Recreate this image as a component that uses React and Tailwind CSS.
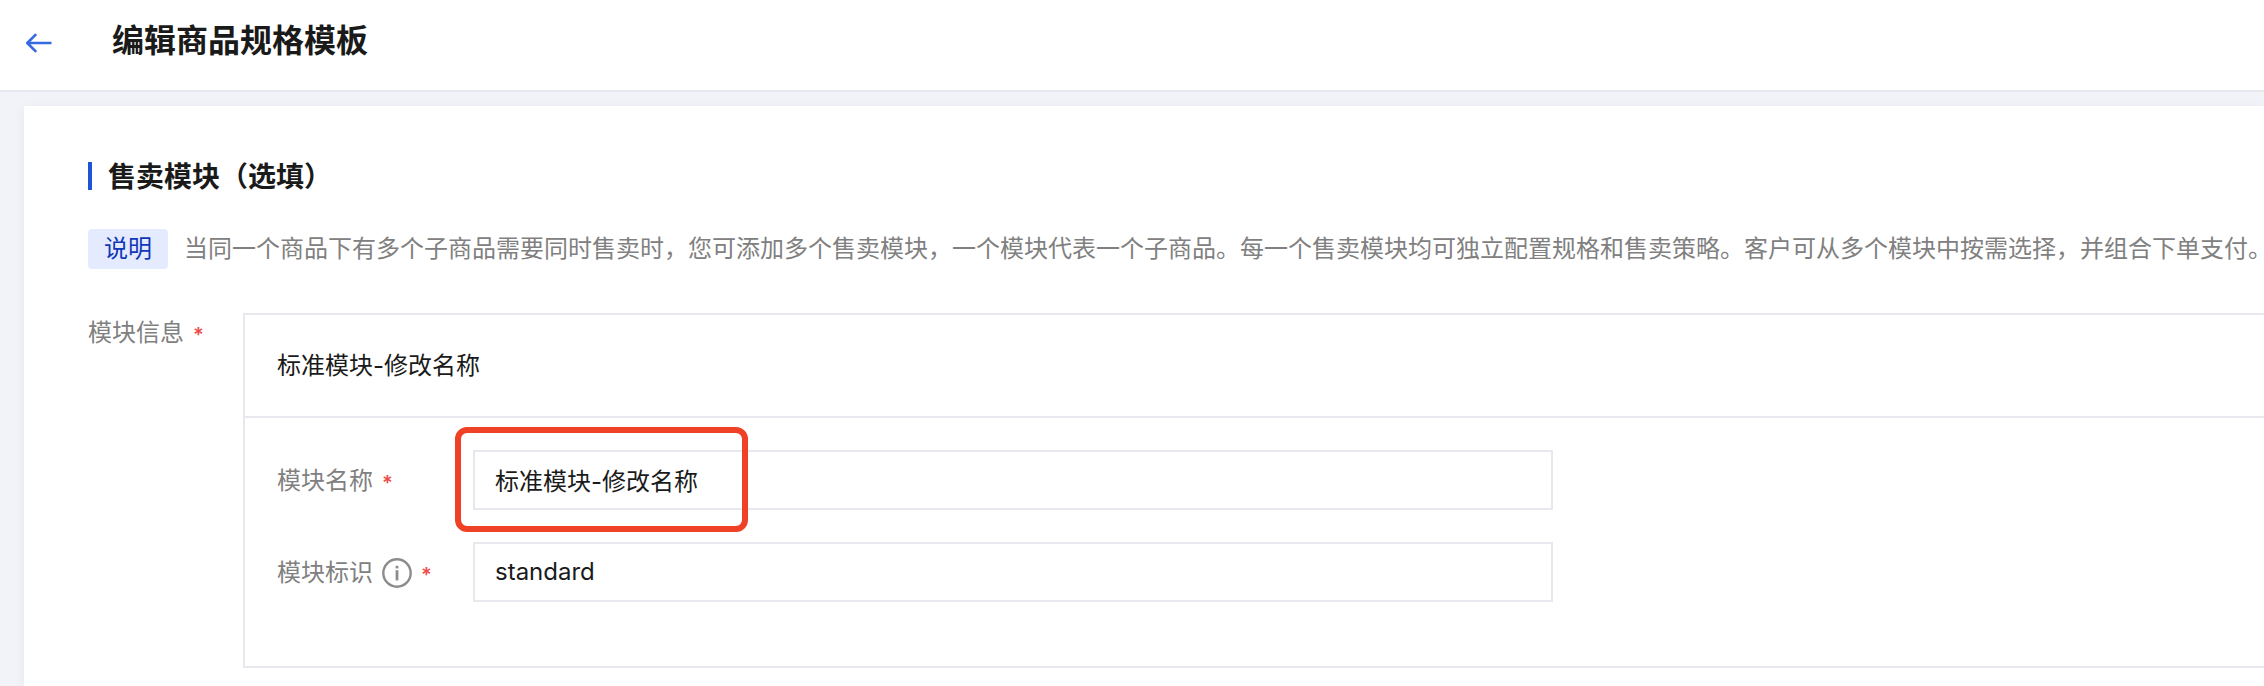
import { useState } from 'react';

function BackIcon() {
  return (
    <svg
      width="26"
      height="20"
      viewBox="0 0 26 20"
      fill="none"
      stroke="currentColor"
      strokeWidth="2.6"
      strokeLinejoin="round"
      aria-hidden="true"
    >
      <path d="M25.5 10H1.3M10.2 1.2L1.3 10l8.9 8.8" />
    </svg>
  );
}

function InfoIcon() {
  return (
    <svg width="30" height="30" viewBox="0 0 30 30" fill="none" aria-hidden="true">
      <circle cx="15" cy="15" r="13.7" stroke="currentColor" strokeWidth="2.4" />
      <rect x="13.6" y="7.8" width="2.8" height="2.6" fill="currentColor" />
      <rect x="13.6" y="12.2" width="2.8" height="10.2" fill="currentColor" />
    </svg>
  );
}

function Required() {
  return <span className="pt-1 text-[20px] leading-6 font-semibold text-[#eb4d4b]">*</span>;
}

function FieldRow({ id, label, info, value, onChange, highlighted }) {
  return (
    <div className="flex items-center">
      <div className="flex w-[196px] shrink-0 items-center gap-[9px] pt-0.5 text-[#808080]">
        <label htmlFor={id}>{label}</label>
        {info && (
          <button type="button" aria-label={label} className="text-[#8c8c8c]">
            <InfoIcon />
          </button>
        )}
        <Required />
      </div>
      <div className="relative w-full max-w-[1080px]">
        <input
          id={id}
          type="text"
          value={value}
          onChange={(e) => onChange(e.target.value)}
          className="block h-[60px] w-full border-2 border-[#e8e8ee] bg-white px-5 pb-0.5 text-[#1a1a1a] outline-none"
        />
        {highlighted && (
          <div className="pointer-events-none absolute -top-[23px] -left-[18px] h-[105px] w-[293px] rounded-xl border-6 border-[#ee4126]" />
        )}
      </div>
    </div>
  );
}

export default function App() {
  const [name, setName] = useState('标准模块-修改名称');
  const [code, setCode] = useState('standard');

  return (
    <div className="flex min-h-screen flex-col bg-[#f2f3f8] font-[Inter,'Noto_Sans_CJK_SC',sans-serif] text-[24px] leading-9 text-[#1a1a1a]">
      <header className="flex h-[92px] items-center gap-[60px] border-b-2 border-[#e6e8ed] bg-white px-[26px] pb-2">
        <button type="button" aria-label="返回" className="pt-1 text-[#366ae0]">
          <BackIcon />
        </button>
        <h1 className="text-[32px] leading-10 font-bold">编辑商品规格模板</h1>
      </header>

      <main className="mt-[14px] ml-6 grow bg-white pl-16 pt-[49px] shadow-[0_2px_12px_rgba(0,0,0,0.05)]">
        <div className="flex items-center gap-4">
          <span className="h-7 w-1 bg-[#1e54d5]" />
          <h2 className="pt-0.5 text-[28px] leading-10 font-bold">售卖模块（选填）</h2>
        </div>

        <div className="mt-8 flex items-center gap-4">
          <span className="shrink-0 rounded bg-[#e5ebff] px-4 leading-10 text-[#0f37b8]">说明</span>
          <p className="whitespace-nowrap text-[#808080]">
            当同一个商品下有多个子商品需要同时售卖时，您可添加多个售卖模块，一个模块代表一个子商品。每一个售卖模块均可独立配置规格和售卖策略。客户可从多个模块中按需选择，并组合下单支付。
          </p>
        </div>

        <div className="mt-11 flex items-start">
          <div className="flex w-[155px] shrink-0 items-center gap-[9px] pt-0.5 text-[#808080]">
            <span>模块信息</span>
            <Required />
          </div>
          <section className="grow border-y-2 border-l-2 border-[#e8e8ee]">
            <h3 className="border-b-2 border-[#e8e8ee] px-8 pt-[33px] pb-8">标准模块-修改名称</h3>
            <div className="flex flex-col gap-8 px-8 pt-8 pb-16">
              <FieldRow id="module-name" label="模块名称" value={name} onChange={setName} highlighted />
              <FieldRow id="module-code" label="模块标识" info value={code} onChange={setCode} />
            </div>
          </section>
        </div>
      </main>
    </div>
  );
}
